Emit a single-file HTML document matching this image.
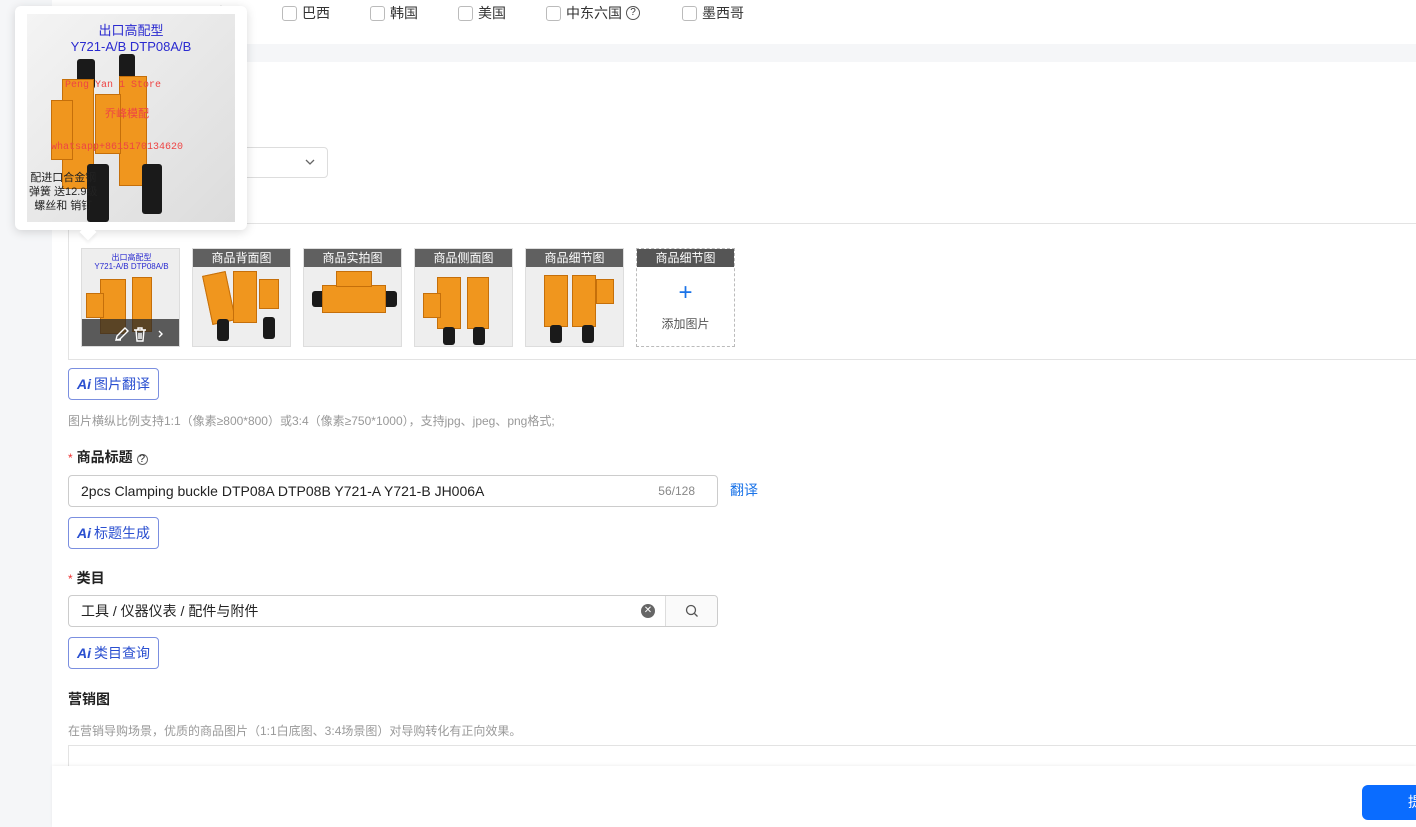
<!DOCTYPE html><html><head><meta charset="utf-8"><style>
*{box-sizing:border-box;margin:0;padding:0}
body{width:1416px;height:827px;overflow:hidden;background:#f5f6f8;font-family:"Liberation Sans","Noto Sans CJK SC",sans-serif;color:#222;position:relative;font-size:13px}
.abs{position:absolute}
.cb{position:absolute;top:3px;font-size:14px;color:#333;display:flex;align-items:center}
.cb i{display:inline-block;width:15px;height:15px;border:1px solid #bbb;border-radius:3px;margin-right:5px}
.thumb{position:absolute;top:248px;width:99px;height:99px;border:1px solid #ddd;background:#eee;overflow:hidden}
.thumb .lb{position:absolute;left:0;top:0;right:0;height:18px;background:rgba(70,70,70,.85);color:#fff;font-size:12px;text-align:center;line-height:18px;z-index:2}
.ob{position:absolute;background:#f0961e;border:1px solid #c56f0a}
.blk{position:absolute;background:#1a1a1a;border-radius:3px}
.aibtn{position:absolute;left:68px;height:32px;border:1px solid #7b8fe0;border-radius:4px;color:#2a4fd0;font-size:14px;line-height:30px;padding:0 8px}
.aibtn b{font-style:italic;font-weight:bold;margin-right:3px}
.lab{position:absolute;left:68px;font-size:14px;font-weight:bold;color:#222}
.lab s{text-decoration:none;color:#e33;font-weight:normal;margin-right:4px;font-size:12px}
.inp{position:absolute;left:68px;width:650px;height:32px;border:1px solid #ccc;border-radius:4px;background:#fff;font-size:14px;line-height:30px;padding-left:12px}
</style></head><body>
<div class="abs" style="left:52px;top:0;width:1364px;height:44px;background:#fff"></div>
<div class="abs" style="left:52px;top:62px;width:1364px;height:765px;background:#fff"></div>
<div class="cb" style="left:91px"><i></i>巴巴巴</div>
<div class="cb" style="left:194px"><i></i>土耳</div>
<div class="cb" style="left:282px"><i></i>巴西</div>
<div class="cb" style="left:370px"><i></i>韩国</div>
<div class="cb" style="left:458px"><i></i>美国</div>
<div class="cb" style="left:546px"><i></i>中东六国 <span style="border:1px solid #555;border-radius:50%;width:14px;height:14px;font-size:10px;line-height:12px;text-align:center;margin-left:4px;display:inline-block">?</span></div>
<div class="cb" style="left:682px"><i></i>墨西哥</div>
<div class="abs" style="left:230px;top:147px;width:98px;height:31px;border:1px solid #ddd;border-radius:4px;background:#fff"><svg class="abs" style="left:74px;top:10px" width="10" height="8"><path d="M1 2l4 4 4-4" fill="none" stroke="#666" stroke-width="1.3"/></svg></div>
<div class="abs" style="left:68px;top:223px;width:1348px;height:137px;border:1px solid #e3e3e3;border-right:none"></div>
<div class="thumb" style="left:81px"><div class="ob" style="left:18px;top:30px;width:26px;height:55px"></div><div class="ob" style="left:50px;top:28px;width:20px;height:55px"></div><div class="ob" style="left:4px;top:44px;width:18px;height:25px"></div><div style="position:absolute;left:0;top:4px;width:99px;text-align:center;color:#2a2ad0;font-size:8px;line-height:9px">出口高配型<br>Y721-A/B DTP08A/B</div><div class="abs" style="left:0;top:70px;width:99px;height:29px;background:rgba(40,40,40,.75)"><svg class="abs" style="left:32px;top:7px" width="50" height="16"><path d="M2 14l1-4 8-8 3 3-8 8z M2 14h5" fill="none" stroke="#fff" stroke-width="1.4"/><path d="M20 4h12M24 4V2h4v2M22 4l1 11h6l1-11M25 7v6M27 7v6" fill="none" stroke="#fff" stroke-width="1.4"/><path d="M45 5l3 3-3 3" fill="none" stroke="#fff" stroke-width="1.4"/></svg></div></div>
<div class="thumb" style="left:192px"><div class="lb">商品背面图</div><div class="ob" style="left:14px;top:24px;width:24px;height:50px;transform:rotate(-12deg)"></div><div class="ob" style="left:40px;top:22px;width:24px;height:52px"></div><div class="ob" style="left:66px;top:30px;width:20px;height:30px"></div><div class="blk" style="left:24px;top:70px;width:12px;height:22px"></div><div class="blk" style="left:70px;top:68px;width:12px;height:22px"></div></div>
<div class="thumb" style="left:303px"><div class="lb">商品实拍图</div><div class="blk" style="left:8px;top:42px;width:85px;height:16px"></div><div class="ob" style="left:18px;top:36px;width:64px;height:28px"></div><div class="ob" style="left:32px;top:22px;width:36px;height:16px"></div></div>
<div class="thumb" style="left:414px"><div class="lb">商品侧面图</div><div class="ob" style="left:22px;top:28px;width:24px;height:52px"></div><div class="ob" style="left:52px;top:28px;width:22px;height:52px"></div><div class="ob" style="left:8px;top:44px;width:18px;height:25px"></div><div class="blk" style="left:28px;top:78px;width:12px;height:18px"></div><div class="blk" style="left:58px;top:78px;width:12px;height:18px"></div></div>
<div class="thumb" style="left:525px"><div class="lb">商品细节图</div><div class="ob" style="left:18px;top:26px;width:24px;height:52px"></div><div class="ob" style="left:46px;top:26px;width:24px;height:52px"></div><div class="ob" style="left:70px;top:30px;width:18px;height:25px"></div><div class="blk" style="left:24px;top:76px;width:12px;height:18px"></div><div class="blk" style="left:56px;top:76px;width:12px;height:18px"></div></div>
<div class="abs" style="left:636px;top:248px;width:99px;height:99px;border:1px dashed #bbb;background:#fff"><div style="height:18px;background:#555;color:#fff;font-size:12px;text-align:center;line-height:18px">商品细节图</div><div style="text-align:center;color:#1a73e8;font-size:24px;line-height:24px;margin-top:14px">+</div><div style="text-align:center;color:#555;font-size:12px;margin-top:10px">添加图片</div></div>
<div class="aibtn" style="top:368px"><b>Ai</b>图片翻译</div>
<div class="abs" style="left:68px;top:412px;font-size:12px;color:#999">图片横纵比例支持1:1（像素≥800*800）或3:4（像素≥750*1000），支持jpg、jpeg、png格式;</div>
<div class="lab" style="top:447px"><s>*</s>商品标题 <span style="font-weight:normal;font-size:11px;border:1px solid #666;border-radius:50%;display:inline-block;width:11px;height:11px;line-height:9px;text-align:center">?</span></div>
<div class="inp" style="top:475px">2pcs  Clamping buckle DTP08A DTP08B Y721-A Y721-B JH006A<span class="abs" style="right:22px;top:0;color:#888;font-size:12px">56/128</span></div>
<div class="abs" style="left:730px;top:480px;color:#1a73e8;font-size:14px">翻译</div>
<div class="aibtn" style="top:517px"><b>Ai</b>标题生成</div>
<div class="lab" style="top:568px"><s>*</s>类目</div>
<div class="inp" style="top:595px">工具 / 仪器仪表 / 配件与附件<span class="abs" style="left:572px;top:8px;width:14px;height:14px;border-radius:50%;background:#666;color:#fff;font-size:10px;line-height:14px;text-align:center">✕</span><span class="abs" style="left:596px;top:0;width:52px;height:30px;border-left:1px solid #ddd;background:#fafafa;border-radius:0 4px 4px 0"><svg class="abs" style="left:19px;top:8px" width="14" height="14"><circle cx="6" cy="6" r="4.5" fill="none" stroke="#555" stroke-width="1.3"/><path d="M9.5 9.5l3 3" stroke="#555" stroke-width="1.3"/></svg></span></div>
<div class="aibtn" style="top:637px"><b>Ai</b>类目查询</div>
<div class="lab" style="top:689px">营销图</div>
<div class="abs" style="left:68px;top:722px;font-size:12px;color:#999">在营销导购场景，优质的商品图片（1:1白底图、3:4场景图）对导购转化有正向效果。</div>
<div class="abs" style="left:68px;top:745px;width:1348px;height:30px;border:1px solid #e3e3e3;border-right:none"></div>
<div class="abs" style="left:52px;top:766px;width:1364px;height:61px;background:#fff;box-shadow:0 -1px 3px rgba(0,0,0,.06)"></div>
<div class="abs" style="left:1362px;top:785px;width:80px;height:35px;background:#0a6cff;border-radius:6px;color:#fff;font-size:14px;line-height:35px;padding-left:46px">提</div>
<div class="abs" style="left:15px;top:6px;width:232px;height:224px;background:#fff;border-radius:6px;box-shadow:0 2px 10px rgba(0,0,0,.15)"></div>
<div class="abs" style="left:82px;top:226px;width:12px;height:12px;background:#fff;transform:rotate(45deg);box-shadow:2px 2px 3px rgba(0,0,0,.06)"></div>
<div class="abs" style="left:27px;top:14px;width:208px;height:208px;background:linear-gradient(135deg,#f4f4f4,#dcdcdc);overflow:hidden">
<div class="blk" style="left:50px;top:45px;width:18px;height:30px"></div><div class="blk" style="left:92px;top:40px;width:16px;height:30px"></div>
<div class="ob" style="left:35px;top:65px;width:32px;height:110px"></div><div class="ob" style="left:92px;top:62px;width:28px;height:110px"></div><div class="ob" style="left:24px;top:86px;width:22px;height:60px"></div><div class="ob" style="left:68px;top:80px;width:26px;height:60px"></div>
<div class="blk" style="left:60px;top:150px;width:22px;height:58px"></div><div class="blk" style="left:115px;top:150px;width:20px;height:50px"></div>
<div style="position:absolute;left:0;top:9px;width:208px;text-align:center;color:#2a2ad0;font-size:13px;line-height:16px">出口高配型<br>Y721-A/B DTP08A/B</div>
<div class="abs" style="left:38px;top:66px;color:#e44;font-size:10px;font-family:'Liberation Mono',monospace">Peng Yan 1 Store</div>
<div class="abs" style="left:78px;top:91px;color:#e44;font-size:11px">乔峰模配</div>
<div class="abs" style="left:24px;top:128px;color:#e44;font-size:10px;font-family:'Liberation Mono',monospace">whatsapp+8615170134620</div>
<div class="abs" style="left:2px;top:157px;color:#222;font-size:11px;line-height:14px;text-align:center">配进口合金钢<br>弹簧 送12.9级<br>螺丝和 销钉</div>
</div>
</body></html>
